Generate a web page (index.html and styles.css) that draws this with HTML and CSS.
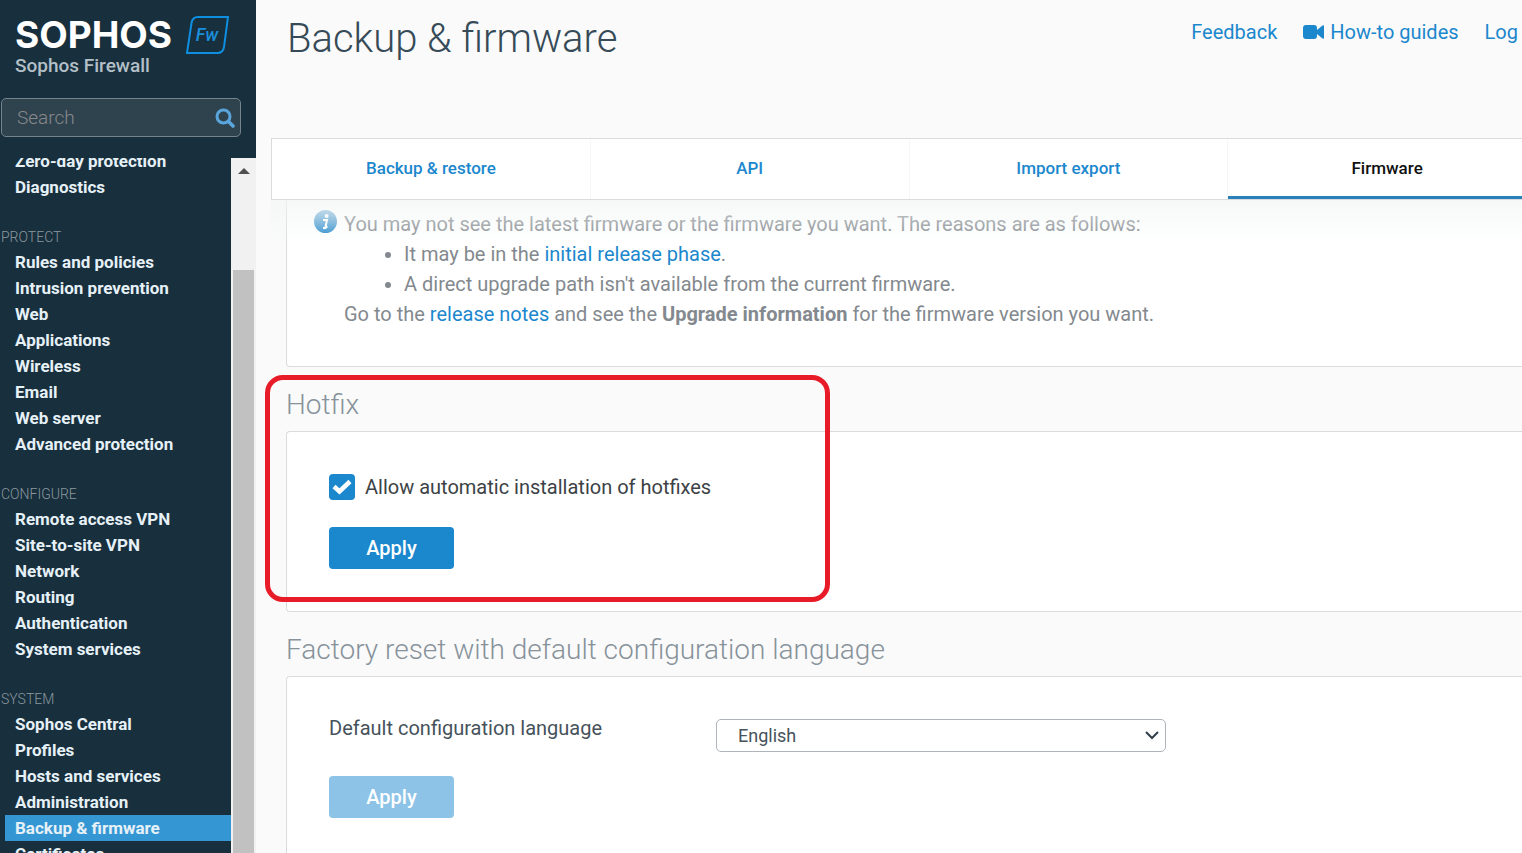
FILE: index.html
```
<!DOCTYPE html>
<html lang="en">

<head>
    <meta charset="UTF-8">
    <title>Backup &amp; firmware</title>
    <link rel="stylesheet" href="styles.css">
</head>

<body>
    <div class="container">
        <div class="sidebar">
            <div class="brand">
                <div class="brand-row">
                    <span class="brand-name">SOPHOS</span>
                    <svg class="brand-badge" width="44" height="38" viewBox="0 0 44 38">
                        <path d="M12 1H42L38 31Q37 37 31.500 37H1L5.500 7Q6.500 1 12 1Z" fill="none" stroke="#0f8fe0" stroke-width="2" />
                        <text class="badge-text" x="21" y="25" text-anchor="middle">Fw</text>
                    </svg>
                </div>
                <div class="brand-product">Sophos Firewall</div>
            </div>
            <form class="search">
                <input type="text" placeholder="Search" aria-label="Search">
                <button type="button" aria-label="Search">
                    <svg width="20" height="20" viewBox="0 0 20 20" fill="none" stroke="#5aa5dc">
                        <circle cx="8.500" cy="8.500" r="6.500" stroke-width="3" />
                        <path d="M13.500 13.500L18 18" stroke-width="3.600" stroke-linecap="round" />
                    </svg>
                </button>
            </form>
            <div class="nav-wrap">
                <nav class="nav">
                    <div class="nav-list">
                        <a href="#">Zero-day protection</a>
                        <a href="#">Diagnostics</a>
                        <h4>PROTECT</h4>
                        <a href="#">Rules and policies</a>
                        <a href="#">Intrusion prevention</a>
                        <a href="#">Web</a>
                        <a href="#">Applications</a>
                        <a href="#">Wireless</a>
                        <a href="#">Email</a>
                        <a href="#">Web server</a>
                        <a href="#">Advanced protection</a>
                        <h4>CONFIGURE</h4>
                        <a href="#">Remote access VPN</a>
                        <a href="#">Site-to-site VPN</a>
                        <a href="#">Network</a>
                        <a href="#">Routing</a>
                        <a href="#">Authentication</a>
                        <a href="#">System services</a>
                        <h4>SYSTEM</h4>
                        <a href="#">Sophos Central</a>
                        <a href="#">Profiles</a>
                        <a href="#">Hosts and services</a>
                        <a href="#">Administration</a>
                        <a href="#" class="active">Backup &amp; firmware</a>
                        <a href="#">Certificates</a>
                    </div>
                </nav>
                <div class="scrollbar">
                    <svg width="12" height="6" viewBox="0 0 12 6"><path d="M0 6L6 0L12 6Z" fill="#505050" /></svg>
                    <div class="scrollbar-thumb"></div>
                </div>
            </div>
        </div>

        <div class="main">
            <div class="header">
                <h1>Backup &amp; firmware</h1>
                <div class="header-links">
                    <a href="#">Feedback</a>
                    <a href="#">
                        <svg width="21" height="14" viewBox="0 0 21 14"><path d="M3 0H11Q14 0 14 3V5L19.500 0.500Q21 0 21 1V13Q21 14 19.500 13.500L14 9V11Q14 14 11 14H3Q0 14 0 11V3Q0 0 3 0Z" fill="#1b87cd" /></svg>
                        How-to guides
                    </a>
                    <a href="#">Log</a>
                </div>
            </div>

            <div class="tabs">
                <a href="#">Backup &amp; restore</a>
                <a href="#">API</a>
                <a href="#">Import export</a>
                <a href="#" class="active">Firmware</a>
            </div>

            <div class="content">
                <div class="panel panel-info">
                    <svg class="info-icon" width="23" height="23" viewBox="0 0 23 23">
                        <defs>
                            <linearGradient id="info" x1="0" y1="0" x2="0" y2="1">
                                <stop offset="0" stop-color="#7fb4d8" />
                                <stop offset="1" stop-color="#2389cc" />
                            </linearGradient>
                        </defs>
                        <circle cx="11.500" cy="11.500" r="11.500" fill="url(#info)" />
                        <circle cx="12.600" cy="6" r="2" fill="#fff" />
                        <path d="M9 10H13L11.500 17H13.500M9 18H11.500L12 14" fill="none" stroke="#fff" stroke-width="2" />
                    </svg>
                    <div class="info-text">
                        <p>You may not see the latest firmware or the firmware you want. The reasons are as follows:</p>
                        <ul>
                            <li>It may be in the <a href="#">initial release phase</a>.</li>
                            <li>A direct upgrade path isn't available from the current firmware.</li>
                        </ul>
                        <p>Go to the <a href="#">release notes</a> and see the <strong>Upgrade information</strong> for the firmware version you want.</p>
                    </div>
                </div>

                <div class="section">
                    <h2>Hotfix</h2>
                    <div class="panel panel-hotfix">
                        <label class="check">
                            <input type="checkbox" checked>
                            <span>Allow automatic installation of hotfixes</span>
                        </label>
                        <button type="button" class="btn">Apply</button>
                    </div>
                    <div class="highlight"></div>
                </div>

                <div class="section">
                    <h2>Factory reset with default configuration language</h2>
                    <div class="panel panel-reset">
                        <div class="form-row">
                            <label for="language">Default configuration language</label>
                            <select id="language">
                                <option>English</option>
                            </select>
                        </div>
                        <button type="button" class="btn" disabled>Apply</button>
                    </div>
                </div>
            </div>
        </div>
    </div>
</body>

</html>
```
FILE: styles.css
```
html,
body {
    margin: 0;
    height: 100%;
    background: #fafafa;
    font-family: Roboto, "Liberation Sans", sans-serif;
}

* {
    box-sizing: border-box;
}

h1, h2, h4, p, ul {
    margin: 0;
    padding: 0;
}

a {
    color: #1b87cd;
    text-decoration: none;
}

svg {
    display: block;
    flex: none;
}

.container {
    display: flex;
    height: 100vh;
    overflow: hidden;
}

/* sidebar */
.sidebar {
    display: flex;
    flex-direction: column;
    flex: none;
    width: 256px;
    background: #182f3d;
}

.brand {
    height: 98px;
    padding: 16px 0 0 15px;
}

.brand-row {
    display: flex;
    align-items: center;
    gap: 16px;
    height: 38px;
}

.brand-name {
    width: 155px;
    color: #fff;
    font-family: Inter, sans-serif;
    font-size: 37px;
    font-weight: 700;
    line-height: 38px;
}

.badge-text {
    fill: #1a8fdc;
    font-size: 18px;
    font-style: italic;
    font-weight: 500;
}

.brand-product {
    color: #b3c0c8;
    font-size: 19px;
    font-weight: 500;
    line-height: 24px;
}

.search {
    display: flex;
    align-items: center;
    width: 240px;
    height: 39px;
    margin: 0 0 21px 1px;
    padding: 0 5px 0 15px;
    border: 1px solid #74838c;
    border-radius: 5px;
    background: #2f434f;
}

.search input {
    flex: 1;
    min-width: 0;
    padding: 0;
    border: 0;
    outline: 0;
    background: none;
    color: #fff;
    font: 300 19px Roboto, sans-serif;
}

.search input::placeholder {
    color: #87888a;
}

.search button {
    padding: 0;
    border: 0;
    background: none;
}

.nav-wrap {
    display: flex;
    flex: 1;
    min-height: 0;
}

.nav {
    flex: 1;
    overflow: hidden;
}

/* list is scrolled a little */
.nav-list {
    margin-top: -10px;
}

.nav-list a {
    display: block;
    margin-left: 5px;
    padding-left: 10px;
    color: #e6f1f7;
    font-size: 17px;
    font-weight: 700;
    line-height: 26px;
}

.nav-list a.active {
    background: #3596d4;
}

.nav-list h4 {
    margin: 26px 0 1px 1px;
    color: #8b989f;
    font-size: 14px;
    font-weight: 300;
    line-height: 22px;
}

.scrollbar {
    display: flex;
    flex-direction: column;
    align-items: center;
    gap: 96px;
    width: 25px;
    padding-top: 10px;
    background: #f1f1f1;
}

.scrollbar-thumb {
    flex: 1;
    width: 21px;
    background: #c1c1c1;
}

/* main */
.main {
    flex: 1;
    min-width: 0;
    overflow: hidden;
}

.header {
    display: flex;
    justify-content: space-between;
    height: 138px;
    padding: 16px 4px 0 31px;
}

.header h1 {
    color: #364a57;
    font-size: 40px;
    font-weight: 300;
    line-height: 46px;
}

.header-links {
    display: flex;
    gap: 26px;
    font-size: 20px;
    line-height: 32px;
}

.header-links a {
    display: flex;
    align-items: center;
    gap: 6px;
    height: 32px;
}

.tabs {
    display: flex;
    height: 62px;
    margin: 0 -26px 0 15px;
    border: 1px solid #d9dcde;
    background: #fff;
}

.tabs a {
    flex: 1;
    border-right: 1px solid #f7f7f7;
    font-size: 17px;
    font-weight: 500;
    line-height: 58px;
    text-align: center;
}

.tabs a.active {
    border-bottom: 3px solid #2a80b9;
    color: #111;
}

.content {
    position: relative;
    padding-left: 30px;
}

/* fade under the tabs */
.content::before {
    content: "";
    position: absolute;
    top: 0;
    left: 15px;
    right: 0;
    height: 45px;
    background: linear-gradient(rgba(243, 246, 246, 0.7), rgba(252, 252, 252, 0));
    z-index: 1;
}

.panel {
    border: 1px solid #d9dcde;
    border-right: 0;
    border-radius: 4px 0 0 4px;
    background: #fff;
}

.panel-info {
    display: flex;
    align-items: flex-start;
    gap: 7px;
    padding: 9px 0 37px 27px;
    border-top: 0;
    border-top-left-radius: 0;
}

.info-icon {
    margin-top: 1px;
}

.info-text {
    color: #83898e;
    font-size: 20px;
    line-height: 30px;
}

.info-text ul {
    padding-left: 60px;
}

.info-text strong {
    font-weight: 700;
}

.section {
    position: relative;
}

.section h2 {
    padding: 22px 0 10px;
    color: #87929a;
    font-size: 28px;
    font-weight: 300;
    line-height: 32px;
}

.panel-hotfix {
    padding: 39px 42px 42px;
}

.panel-reset {
    height: 240px;
    padding: 42px;
}

.check {
    display: flex;
    align-items: center;
    gap: 10px;
    margin-bottom: 24px;
    color: #3c4246;
    font-size: 20px;
    line-height: 32px;
}

.check input {
    appearance: none;
    width: 26px;
    height: 26px;
    margin: 0;
    border-radius: 4px;
    background: #1b87cd url("data:image/svg+xml,%3Csvg xmlns='http://www.w3.org/2000/svg' viewBox='0 0 26 26'%3E%3Cpath d='M5 12.500L10.500 17.500L21 7.500' fill='none' stroke='%23fff' stroke-width='4.500'/%3E%3C/svg%3E");
}

.btn {
    display: block;
    width: 125px;
    height: 42px;
    padding: 0;
    border: 0;
    border-radius: 4px;
    background: #1b87cd;
    color: #fff;
    font: 500 20px Roboto, sans-serif;
}

.btn:disabled {
    background: #8dc3e6;
}

.form-row {
    display: flex;
    margin-bottom: 24px;
}

.form-row label {
    width: 387px;
    color: #46525b;
    font-size: 20px;
    line-height: 18px;
}

.form-row select {
    appearance: none;
    width: 450px;
    height: 33px;
    padding: 0 21px;
    border: 1px solid #aeb4b9;
    border-radius: 5px;
    background: #fff url("data:image/svg+xml,%3Csvg xmlns='http://www.w3.org/2000/svg' width='14' height='9'%3E%3Cpath d='M1 1L7 7L13 1' fill='none' stroke='%23333f48' stroke-width='2'/%3E%3C/svg%3E") no-repeat right 6px center;
    color: #46525b;
    font: 400 18px Roboto, sans-serif;
}

.highlight {
    position: absolute;
    top: 8px;
    left: -21px;
    width: 565px;
    height: 227px;
    border: 5px solid #e81c28;
    border-radius: 18px;
    pointer-events: none;
}
```
